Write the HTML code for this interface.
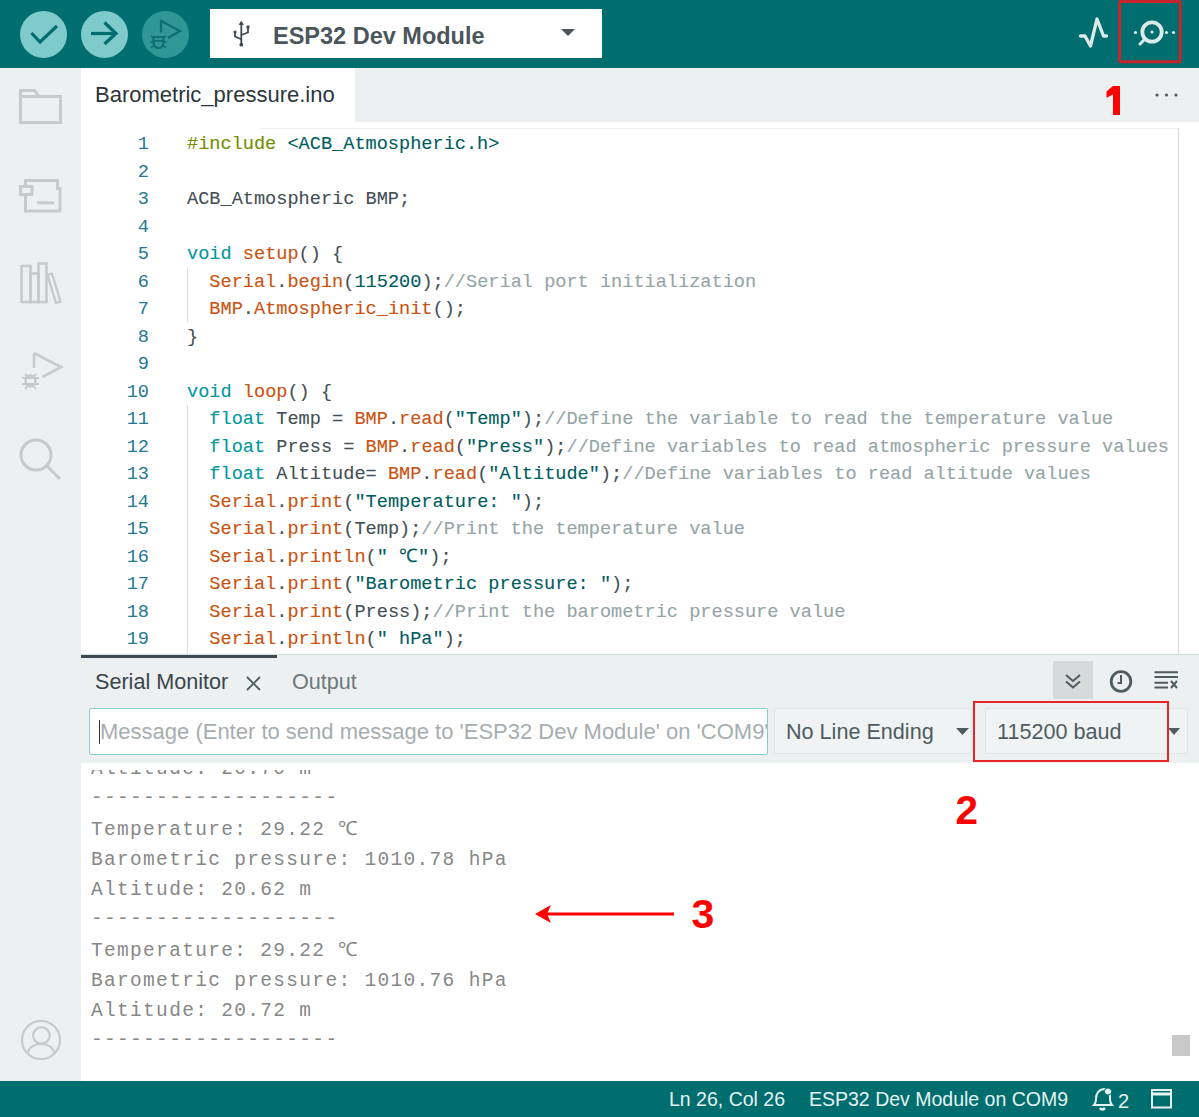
<!DOCTYPE html>
<html><head><meta charset="utf-8">
<style>
*{margin:0;padding:0;box-sizing:border-box}
html,body{width:1199px;height:1117px;overflow:hidden;background:#fff;font-family:"Liberation Sans",sans-serif}
.abs{position:absolute}
svg{position:absolute;overflow:visible}
#toolbar{left:0;top:0;width:1199px;height:68px;background:#006d6f}
.circ{position:absolute;top:10.5px;width:47px;height:47px;border-radius:50%;background:#7fcacb}
#board{left:210px;top:9px;width:392px;height:49px;background:#fff}
#side{left:0;top:68px;width:81px;height:1013px;background:#ecf0f1}
#tabbar{left:81px;top:68px;width:1118px;height:54px;background:#ecf0f1}
#tab{left:81px;top:68px;width:274px;height:60px;background:#fff}
#editor{left:81px;top:128px;width:1118px;height:526px;background:#fff}
.code{position:absolute;left:0;-webkit-text-stroke:0.12px;font-family:"Liberation Mono",monospace;font-size:18.6px;white-space:pre;line-height:27.5px;color:#434f54}
.ln{position:absolute;width:68px;text-align:right;color:#237893;font-family:"Liberation Mono",monospace;font-size:18.6px;line-height:27.5px}
.kw{color:#00979d}.fn{color:#c9520f}.str{color:#005c5f}.cm{color:#95a5a6}.inc{color:#728e00}
#panelhdr{left:81px;top:654px;width:1118px;height:52px;background:#ecf0f1}
#sm{left:81px;top:706px;width:1118px;height:57px;background:#ecf0f1}
#out{left:81px;top:763px;width:1118px;height:318px;background:#fff;overflow:hidden}
.outtxt{position:absolute;left:10px;font-family:"Liberation Mono",monospace;font-size:19.5px;letter-spacing:1.32px;line-height:30.25px;white-space:pre;color:#878787}
.dash{position:relative;top:-1px}
#status{left:0;top:1081px;width:1199px;height:36px;background:#006d6f}
.ui{position:absolute;white-space:pre;line-height:1}
.red{color:#f00;font-weight:bold;font-family:"Liberation Sans",sans-serif}
</style></head><body>
<div id="toolbar" class="abs">
  <div class="circ" style="left:20.3px"></div>
  <div class="circ" style="left:81px"></div>
  <div class="circ" style="left:142px;background:#309797"></div>
  <svg width="1199" height="68" style="left:0;top:0">
    <polyline points="31.5,33 40,42 57,26" fill="none" stroke="#006d6f" stroke-width="3.2"/>
    <line x1="91" y1="33.5" x2="116" y2="33.5" stroke="#006d6f" stroke-width="3.2"/>
    <polyline points="104.5,22.5 116,33.5 104.5,44" fill="none" stroke="#006d6f" stroke-width="3.2"/>
    <path d="M161,32.5 V21 L180,31 L168,38" fill="none" stroke="#0d6f71" stroke-width="2.3"/>
    <path d="M153.5,37 h10 v5 q0,6 -5,6 q-5,0 -5,-6 z" fill="none" stroke="#0d6f71" stroke-width="2.2"/>
    <path d="M153.5,40.8 h10 M150,42 h3.5 M163.5,42 h3 M151,36 l2.5,1.5 M166,36 l-2.5,1.5 M151,47.5 l2.5,-1.5 M166,47.5 l-2.5,-1.5" fill="none" stroke="#0d6f71" stroke-width="1.7"/>
    <!-- plotter -->
    <polyline points="1080.5,36 1085,36 1090.5,46 1097,19 1103.5,36 1106.5,36" fill="none" stroke="#dcebea" stroke-width="3.3" stroke-linejoin="round" stroke-linecap="round"/>
    <!-- monitor -->
    <circle cx="1152" cy="32" r="9.7" fill="none" stroke="#dcebea" stroke-width="3.8"/>
    <circle cx="1152" cy="32" r="1.6" fill="#d9eeee"/>
    <circle cx="1135.5" cy="32.5" r="1.6" fill="#d9eeee"/>
    <circle cx="1166.5" cy="32.5" r="1.6" fill="#d9eeee"/>
    <circle cx="1173.5" cy="32.5" r="1.6" fill="#d9eeee"/>
    <line x1="1140" y1="44" x2="1144" y2="40" stroke="#d9eeee" stroke-width="3" stroke-linecap="round"/>
    <rect x="1119.5" y="1.5" width="60.7" height="60.2" rx="1.5" fill="none" stroke="#c8242c" stroke-width="3"/>
  </svg>
</div>
<div id="board" class="abs">
  <svg width="60" height="49" style="left:0;top:0">
    <line x1="31.3" y1="13" x2="31.3" y2="36" stroke="#3f4a50" stroke-width="1.8"/>
    <path d="M29.3,15.5 h4 l-2,-3 z" fill="#3f4a50" stroke="#3f4a50" stroke-width="1"/>
    <circle cx="31.3" cy="35.7" r="1.9" fill="#3f4a50"/>
    <polyline points="31.3,30.3 25,27.5 25,23" fill="none" stroke="#3f4a50" stroke-width="1.8"/>
    <circle cx="25" cy="23" r="1.6" fill="#3f4a50"/>
    <polyline points="31.3,26 38,23.5 38,17.5" fill="none" stroke="#3f4a50" stroke-width="1.8"/>
    <rect x="36.5" y="16.5" width="3" height="3" fill="#3f4a50"/>
  </svg>
  <div class="ui" style="left:63px;top:16px;font-size:23.5px;font-weight:bold;color:#4b565c">ESP32 Dev Module</div>
  <svg width="392" height="49" style="left:0;top:0"><path d="M351,20 h14 l-7,7 z" fill="#4b565c"/></svg>
</div>
<div id="side" class="abs">
  <svg width="81" height="1013" style="left:0;top:0" fill="none" stroke="#c5cbcc" stroke-width="3">
    <path d="M20.5,22.5 h14 l4.5,6 h21.5 v26 h-40 z M20.5,28.5 h18.5"/>
    <path d="M25.5,112.5 h32 v8 h2.5 v22.5 h-34.5 z"/>
    <rect x="20.5" y="118.5" width="11.5" height="8" fill="#ecf0f1"/>
    <line x1="37" y1="134.8" x2="54" y2="134.8"/>
    <rect x="21.5" y="198" width="9" height="36" stroke-width="2.6"/>
    <rect x="30.5" y="205.5" width="8" height="28.5" stroke-width="2.6"/>
    <rect x="38.5" y="195.5" width="8" height="38.5" stroke-width="2.6"/>
    <path d="M47.5,207 l4.5,-1.5 l8.5,28 l-4.5,1.5 z" stroke-width="2.4"/>
    <polyline points="34,285 61,299 42.5,309" stroke-width="2.6"/>
    <line x1="34" y1="285" x2="34" y2="300" stroke-width="2.6"/>
    <ellipse cx="30.5" cy="313" rx="5" ry="5.5" stroke-width="2.4"/>
    <path d="M22,310 h17 M22,316 h17 M25,306 l2,2 M36,306 l-2,2 M25,321 l2,-2 M36,321 l-2,-2" stroke-width="2"/>
    <circle cx="36" cy="387" r="15" stroke-width="3"/>
    <line x1="47" y1="398" x2="60" y2="411" stroke-width="3"/>
    <circle cx="41" cy="972" r="19" stroke-width="2.2"/>
    <circle cx="41.4" cy="967.5" r="8.3" stroke-width="2.2"/>
    <path d="M27,986 q3,-10 14,-10 q11,0 14,10" stroke-width="2.2"/>
  </svg>
</div>
<div id="tabbar" class="abs"></div>
<div id="tab" class="abs">
  <div class="ui" style="left:14px;top:16px;font-size:22px;color:#2c353a">Barometric_pressure.ino</div>
</div>
<svg width="30" height="40" style="left:1101px;top:80px"><path d="M12,6 h7 v29 h-7 v-20.5 l-6.5,3.2 v-6.2 z" fill="#f00"/></svg>
<svg width="30" height="10" style="left:1153px;top:90px"><circle cx="4" cy="5" r="1.6" fill="#4e5b61"/><circle cx="13.5" cy="5" r="1.6" fill="#4e5b61"/><circle cx="23" cy="5" r="1.6" fill="#4e5b61"/></svg>
<div id="editor" class="abs">
<div class="abs" style="left:179px;top:0;width:918px;height:1px;background:#eef0f0"></div>
<div class="abs" style="left:1097px;top:0;width:1px;height:526px;background:#d4d8d8"></div>
<div class="abs" style="left:106px;top:139px;width:1px;height:55px;background:#dcdcdc"></div>
<div class="abs" style="left:106px;top:277px;width:1px;height:249px;background:#dcdcdc"></div>
<div class="ln" style="left:0;top:3px">1<br>2<br>3<br>4<br>5<br>6<br>7<br>8<br>9<br>10<br>11<br>12<br>13<br>14<br>15<br>16<br>17<br>18<br>19</div>
<div class="code" style="left:106px;top:3px"><span class="inc">#include</span> <span class="str">&lt;ACB_Atmospheric.h&gt;</span>

ACB_Atmospheric BMP;

<span class="kw">void</span> <span class="fn">setup</span>() {
  <span class="fn">Serial</span>.<span class="fn">begin</span>(<span class="str">115200</span>);<span class="cm">//Serial port initialization</span>
  <span class="fn">BMP</span>.<span class="fn">Atmospheric_init</span>();
}

<span class="kw">void</span> <span class="fn">loop</span>() {
  <span class="kw">float</span> Temp = <span class="fn">BMP</span>.<span class="fn">read</span>(<span class="str">"Temp"</span>);<span class="cm">//Define the variable to read the temperature value</span>
  <span class="kw">float</span> Press = <span class="fn">BMP</span>.<span class="fn">read</span>(<span class="str">"Press"</span>);<span class="cm">//Define variables to read atmospheric pressure values</span>
  <span class="kw">float</span> Altitude= <span class="fn">BMP</span>.<span class="fn">read</span>(<span class="str">"Altitude"</span>);<span class="cm">//Define variables to read altitude values</span>
  <span class="fn">Serial</span>.<span class="fn">print</span>(<span class="str">"Temperature: "</span>);
  <span class="fn">Serial</span>.<span class="fn">print</span>(Temp);<span class="cm">//Print the temperature value</span>
  <span class="fn">Serial</span>.<span class="fn">println</span>(<span class="str">" ℃"</span>);
  <span class="fn">Serial</span>.<span class="fn">print</span>(<span class="str">"Barometric pressure: "</span>);
  <span class="fn">Serial</span>.<span class="fn">print</span>(Press);<span class="cm">//Print the barometric pressure value</span>
  <span class="fn">Serial</span>.<span class="fn">println</span>(<span class="str">" hPa"</span>);</div>
</div>
<div id="panelhdr" class="abs">
  <div class="abs" style="left:0;top:0;width:1118px;height:1px;background:#d6dbdc"></div>
  <div class="abs" style="left:0;top:1px;width:196px;height:2.5px;background:#3f4a50"></div>
  <div class="ui" style="left:14px;top:17px;font-size:21.6px;color:#3a454b">Serial Monitor</div>
  <svg width="20" height="20" style="left:164px;top:21px"><path d="M2,2 L15,15 M15,2 L2,15" stroke="#4e5b61" stroke-width="1.8"/></svg>
  <div class="ui" style="left:211px;top:17px;font-size:21.6px;color:#6d787d">Output</div>
  <div class="abs" style="left:972px;top:7px;width:40px;height:38px;background:#d5dada"></div>
  <svg width="1118" height="52" style="left:0;top:0" fill="none" stroke="#4e5b61">
    <polyline points="985,21 992,27 999,21" stroke-width="2"/>
    <polyline points="985,27.5 992,33.5 999,27.5" stroke-width="2"/>
    <circle cx="1040" cy="27.5" r="9.8" stroke-width="2.8"/>
    <polyline points="1040,21 1040,29 1036.5,29" stroke-width="2"/>
    <path d="M1073.5,18.2 h23.5 M1073.5,23 h23.5 M1073.5,28.8 h13.5 M1073.5,33.5 h13.5 M1090,27 l6,7 M1096,27 l-6,7" stroke-width="2"/>
  </svg>
</div>
<div id="sm" class="abs">
  <div class="abs" style="left:8px;top:2px;width:679px;height:47px;background:#fff;border:1px solid #86cfd0;border-radius:2px;overflow:hidden">
    <div class="abs" style="left:8.5px;top:11px;width:1.2px;height:24px;background:#333"></div>
    <div class="ui" style="left:10px;top:12px;font-size:22px;color:#a6adb0">Message (Enter to send message to 'ESP32 Dev Module' on 'COM9')</div>
  </div>
  <div class="abs" style="left:693px;top:2px;width:198px;height:46px;background:#f0f3f3;border:1px solid #e0e5e5;border-radius:2px">
    <div class="ui" style="left:11px;top:12px;font-size:21.6px;color:#4e5b61">No Line Ending</div>
    <svg width="20" height="10" style="left:181px;top:19px"><path d="M0,0 h13 l-6.5,7 z" fill="#4e5b61"/></svg>
  </div>
  <div class="abs" style="left:904px;top:2px;width:203px;height:46px;background:#f0f3f3;border:1px solid #e0e5e5;border-radius:2px">
    <div class="ui" style="left:11px;top:12px;font-size:21.6px;color:#4e5b61">115200 baud</div>
    <svg width="20" height="10" style="left:182px;top:19px"><path d="M0,0 h12 l-6,7 z" fill="#4e5b61"/></svg>
  </div>
  <div class="abs" style="left:892px;top:-5px;width:196px;height:61px;border:2.5px solid #e8242a"></div>
</div>
<div id="out" class="abs">
<div class="abs" style="left:0;top:7px;width:1118px;height:311px;overflow:hidden">
<div class="outtxt" style="top:-16px">Altitude: 20.70 m
<span class="dash">-------------------</span>
Temperature: 29.22 ℃
Barometric pressure: 1010.78 hPa
Altitude: 20.62 m
<span class="dash">-------------------</span>
Temperature: 29.22 ℃
Barometric pressure: 1010.76 hPa
Altitude: 20.72 m
<span class="dash">-------------------</span></div></div>
<div class="abs" style="left:1091px;top:272px;width:18px;height:21px;background:#c8c8c8"></div>
</div>
<div class="abs red" style="left:955.5px;top:790px;font-size:40.5px;line-height:1">2</div>
<div class="abs red" style="left:691.5px;top:894px;font-size:41px;line-height:1">3</div>
<svg width="200" height="30" style="left:530px;top:900px"><line x1="14" y1="14" x2="144" y2="14" stroke="#f00" stroke-width="3"/><path d="M5,14 L21,5 L17,14 L21,23 z" fill="#f00"/></svg>
<div id="status" class="abs">
  <div class="ui" style="left:669px;top:9px;font-size:19.5px;color:#e6f2f2">Ln 26, Col 26</div>
  <div class="ui" style="left:809px;top:9px;font-size:19.5px;color:#e6f2f2">ESP32 Dev Module on COM9</div>
  <svg width="1199" height="36" style="left:0;top:0" fill="none" stroke="#e6f2f2" stroke-width="2">
    <path d="M1094,24 q2,-2 2,-6 q0,-9 8,-10 q5,0 6,6 v4 q0,4 2,6 z"/>
    <path d="M1100,27 q2,3 5,0" stroke-width="2.5"/>
    <circle cx="1108" cy="10.5" r="3.6" fill="#e6f2f2" stroke="#006d6f" stroke-width="1"/>
    <rect x="1152" y="9" width="19" height="17.5"/>
    <line x1="1152" y1="13" x2="1171" y2="13" stroke-width="3"/>
  </svg>
  <div class="ui" style="left:1118px;top:10px;font-size:20px;color:#e6f2f2">2</div>
</div>
</body></html>
